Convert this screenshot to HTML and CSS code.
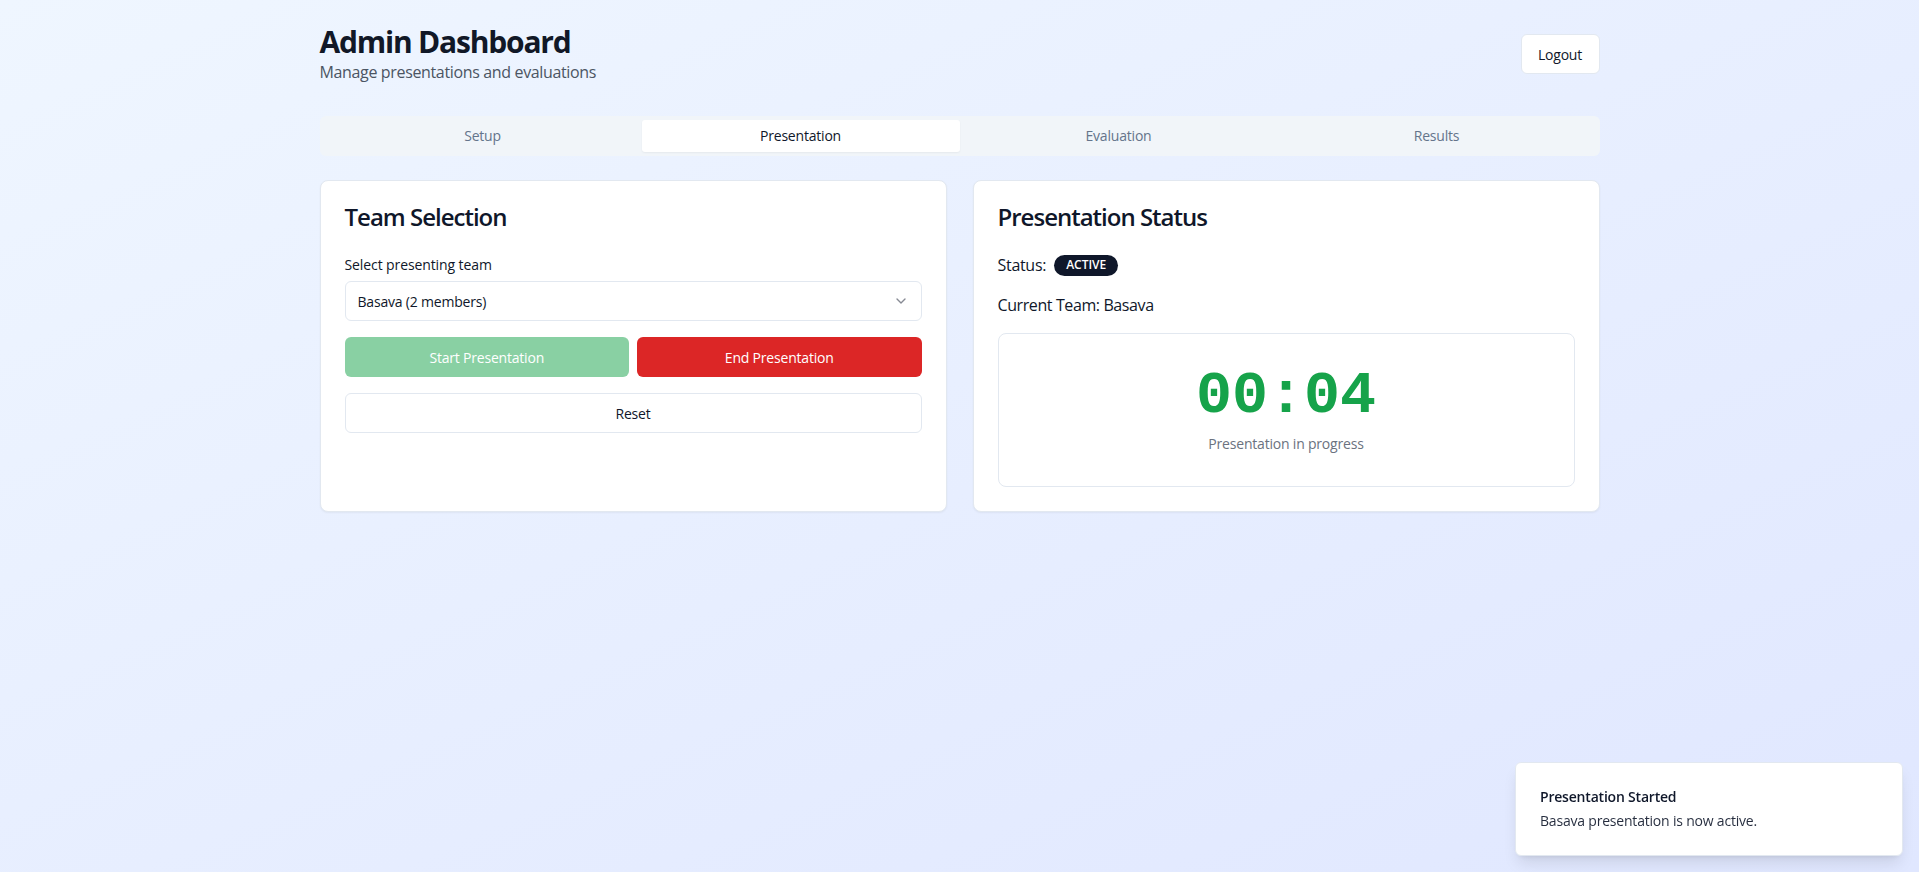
FILE: index.html
```html
<!DOCTYPE html>
<html lang="en">
<head>
<meta charset="utf-8">
<title>Admin Dashboard</title>
<link rel="stylesheet" href="styles.css">
</head>
<body>
<div class="page">
  <div class="container">
    <header class="header">
      <div class="header-text">
        <h1 class="title">Admin Dashboard</h1>
        <p class="subtitle">Manage presentations and evaluations</p>
      </div>
      <button class="btn btn-outline btn-logout">Logout</button>
    </header>

    <nav class="tabs">
      <div class="tab">Setup</div>
      <div class="tab tab-active">Presentation</div>
      <div class="tab">Evaluation</div>
      <div class="tab">Results</div>
    </nav>

    <div class="grid">
      <section class="card">
        <div class="card-header">
          <h2 class="card-title">Team Selection</h2>
        </div>
        <div class="card-content stack">
          <div class="field">
            <label class="label">Select presenting team</label>
            <div class="select">
              <span>Basava (2 members)</span>
              <svg class="chevron" width="16" height="16" viewBox="0 0 24 24" fill="none" stroke="currentColor" stroke-width="2" stroke-linecap="round" stroke-linejoin="round"><path d="m6 9 6 6 6-6"/></svg>
            </div>
          </div>
          <div class="btn-row">
            <button class="btn btn-green" disabled>Start Presentation</button>
            <button class="btn btn-red">End Presentation</button>
          </div>
          <button class="btn btn-outline btn-full">Reset</button>
        </div>
      </section>

      <section class="card">
        <div class="card-header">
          <h2 class="card-title">Presentation Status</h2>
        </div>
        <div class="card-content stack">
          <div class="status-row">
            <span>Status:</span>
            <span class="badge">ACTIVE</span>
          </div>
          <div class="team-row"><span class="strong">Current Team:</span> Basava</div>
          <div class="timer-box">
            <div class="timer">00:04</div>
            <div class="timer-caption">Presentation in progress</div>
          </div>
        </div>
      </section>
    </div>
  </div>
</div>

<div class="toast-viewport">
  <div class="toast">
    <div class="toast-title">Presentation Started</div>
    <div class="toast-desc">Basava presentation is now active.</div>
  </div>
</div>
</body>
</html>
```

FILE: styles.css
```css
* { box-sizing: border-box; }

html, body {
  margin: 0;
  padding: 0;
}

body {
  min-height: 100vh;
  font-family: "Open Sans", "Noto Sans", "Liberation Sans", sans-serif;
  color: #0f172a;
  background: linear-gradient(to bottom right, #eff6ff, #e0e7ff);
}

.page {
  padding: 24px 16px;
}

.container {
  max-width: 1280px;
  margin: 0 auto;
}

.header {
  display: flex;
  justify-content: space-between;
  align-items: center;
  margin-bottom: 32px;
}

.title {
  margin: 0;
  font-size: 30px;
  line-height: 36px;
  font-weight: 700;
  color: #111827;
  letter-spacing: -1.2px;
}

.subtitle {
  margin: 0;
  font-size: 16px;
  line-height: 24px;
  color: #4b5563;
  letter-spacing: -0.35px;
}

.btn {
  display: inline-flex;
  align-items: center;
  justify-content: center;
  height: 40px;
  padding: 0 16px;
  border-radius: 6px;
  font-family: inherit;
  font-size: 14px;
  font-weight: 500;
  border: 1px solid transparent;
  letter-spacing: -0.2px;
  cursor: pointer;
}

.btn-outline {
  background: #ffffff;
  border-color: #e2e8f0;
  color: #0f172a;
}

.btn-logout {
  width: 79px;
}

.btn-green {
  background: #16a34a;
  color: #ffffff;
  opacity: 0.5;
  flex: 1;
}

.btn-red {
  background: #dc2626;
  color: #ffffff;
  flex: 1;
}

.btn-full {
  width: 100%;
}

.tabs {
  display: grid;
  grid-template-columns: repeat(4, 1fr);
  height: 40px;
  padding: 4px;
  background: #f1f5f9;
  border-radius: 6px;
  margin-bottom: 24px;
}

.tab {
  display: flex;
  align-items: center;
  justify-content: center;
  font-size: 14px;
  font-weight: 500;
  color: #64748b;
  border-radius: 3px;
  letter-spacing: -0.2px;
  padding-bottom: 1px;
}

.tab-active {
  background: #ffffff;
  color: #0f172a;
  box-shadow: 0 1px 2px rgba(0, 0, 0, 0.05);
}

.grid {
  display: grid;
  grid-template-columns: 1fr 1fr;
  gap: 26px;
}

.card {
  background: #ffffff;
  border: 1px solid #e2e8f0;
  border-radius: 8px;
  box-shadow: 0 1px 2px rgba(0, 0, 0, 0.05);
}

.card-header {
  padding: 24px;
}

.card-title {
  margin: 0;
  font-size: 24px;
  line-height: 24px;
  font-weight: 600;
  letter-spacing: -1px;
}

.card-content {
  padding: 0 24px 24px;
}

.stack {
  display: flex;
  flex-direction: column;
  gap: 16px;
}

.field {
  display: flex;
  flex-direction: column;
  gap: 6px;
}

.label {
  font-size: 14px;
  line-height: 20px;
  font-weight: 500;
  letter-spacing: -0.1px;
  padding-top: 2px;
}

.select {
  display: flex;
  align-items: center;
  justify-content: space-between;
  height: 40px;
  padding: 0 12px;
  border: 1px solid #e2e8f0;
  border-radius: 6px;
  font-size: 14px;
  letter-spacing: -0.2px;
}

.chevron {
  opacity: 0.5;
}

.btn-row {
  display: flex;
  gap: 8px;
}

.status-row {
  display: flex;
  align-items: center;
  gap: 8px;
  font-size: 16px;
  line-height: 24px;
  letter-spacing: -0.3px;
}

.badge {
  display: inline-flex;
  align-items: center;
  height: 21px;
  padding: 0 12px;
  border-radius: 9999px;
  background: #0f172a;
  color: #ffffff;
  font-size: 12px;
  font-weight: 600;
  letter-spacing: 0;
}

.team-row {
  font-size: 16px;
  line-height: 24px;
  letter-spacing: -0.4px;
}

.strong {
  font-weight: 500;
}

.timer-box {
  border: 1px solid #e2e8f0;
  border-radius: 8px;
  padding: 32px;
  text-align: center;
}

.timer {
  font-family: "Liberation Mono", "DejaVu Sans Mono", monospace;
  font-size: 60px;
  line-height: 60px;
  font-weight: 700;
  color: #16a34a;
}

.timer-caption {
  margin-top: 8px;
  font-size: 14px;
  line-height: 20px;
  color: #6b7280;
  letter-spacing: -0.2px;
}

.toast-viewport {
  position: fixed;
  right: 0;
  bottom: 0;
  width: 420px;
  padding: 16px;
}

.toast {
  display: flex;
  flex-direction: column;
  gap: 4px;
  background: #ffffff;
  border: 1px solid #e2e8f0;
  border-radius: 6px;
  padding: 24px 32px 24px 24px;
  box-shadow: 0 10px 15px -3px rgba(0, 0, 0, 0.1), 0 4px 6px -4px rgba(0, 0, 0, 0.1);
}

.toast-title {
  font-size: 14px;
  line-height: 20px;
  font-weight: 600;
  letter-spacing: -0.2px;
}

.toast-desc {
  font-size: 14px;
  line-height: 20px;
  opacity: 0.9;
  letter-spacing: -0.2px;
}
```
